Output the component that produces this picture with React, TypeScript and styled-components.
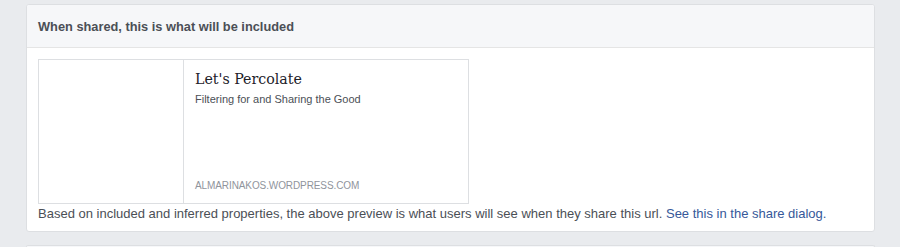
import React from "react";
import styled, { createGlobalStyle } from "styled-components";

const Global = createGlobalStyle`
  html, body { margin: 0; padding: 0; background: #e9ebee; }
  body { font-family: "Liberation Sans", Arial, sans-serif; }
`;

const Page = styled.div`
  padding: 4px 25px 0 26px;
  display: flex;
  flex-direction: column;
  gap: 13px;
`;

const Card = styled.section`
  background: #fff;
  border: 1px solid #dddfe2;
  border-radius: 3px;
  width: 847px;
  overflow: hidden;
`;

const Header = styled.div`
  background: #f6f7f9;
  border-bottom: 1px solid #e5e5e5;
  height: 43px;
  display: flex;
  align-items: center;
  padding-left: 11px;
  font-size: 12.8px;
  font-weight: bold;
  color: #4b4f56;
  padding-top: 1px;
  box-sizing: border-box;
`;

const Body = styled.div`
  padding: 11px 11px 0 11px;
  height: 183px;
  box-sizing: border-box;
`;

const Preview = styled.div`
  width: 431px;
  height: 145px;
  box-sizing: border-box;
  border: 1px solid #dddfe2;
  display: flex;
`;

const Thumb = styled.div`
  width: 144px;
  border-right: 1px solid #dddfe2;
  background: #fff;
`;

const Info = styled.div`
  flex: 1;
  padding: 8px 11px 11px 11px;
  display: flex;
  flex-direction: column;
`;

const Title = styled.div`
  font-family: "DejaVu Serif", Georgia, serif;
  font-size: 14.2px;
  color: #1d2129;
  line-height: 22px;
`;

const Sub = styled.div`
  font-size: 11px;
  color: #4b4f56;
  line-height: 14px;
  margin-top: 2px;
`;

const Domain = styled.div`
  margin-top: auto;
  font-size: 10px;
  letter-spacing: -0.1px;
  color: #90949c;
  text-transform: uppercase;
  line-height: 12px;
`;

const Note = styled.p`
  margin: 1px 0 0 0;
  font-size: 13px;
  line-height: 17px;
  color: #4b4f56;
`;

const Link = styled.a`
  color: #365899;
  text-decoration: none;
`;

const NextCard = styled.div`
  background: #f6f7f9;
  border: 1px solid #dddfe2;
  border-bottom: none;
  border-radius: 3px 3px 0 0;
  width: 847px;
  height: 1px;
`;

export default function App() {
  return (
    <>
      <Global />
      <Page>
        <Card>
          <Header>When shared, this is what will be included</Header>
          <Body>
            <Preview>
              <Thumb />
              <Info>
                <Title>Let's Percolate</Title>
                <Sub>Filtering for and Sharing the Good</Sub>
                <Domain>almarinakos.wordpress.com</Domain>
              </Info>
            </Preview>
            <Note>
              Based on included and inferred properties, the above preview is what users will see when they share this url.{" "}
              <Link href="#">See this in the share dialog.</Link>
            </Note>
          </Body>
        </Card>
        <NextCard />
      </Page>
    </>
  );
}
